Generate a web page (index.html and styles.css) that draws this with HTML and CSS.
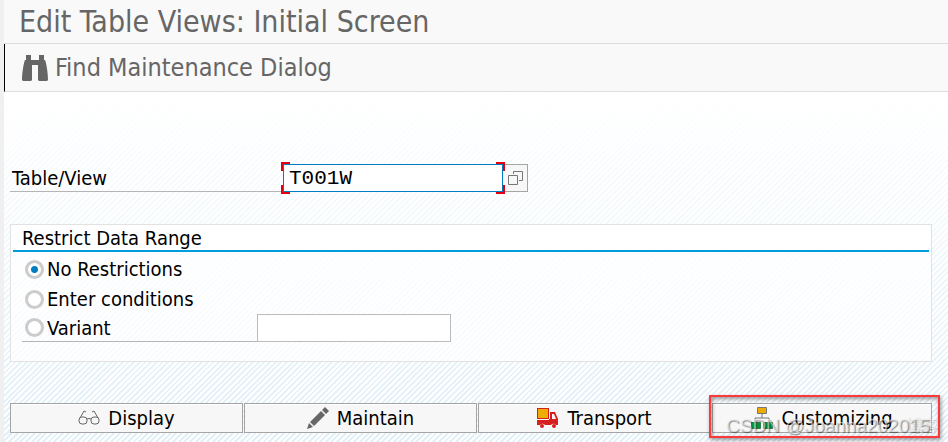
FILE: index.html
```html
<!DOCTYPE html>
<html lang="en">
  <head>
    <meta charset="UTF-8" />
    <meta name="viewport" content="width=device-width, initial-scale=1.0" />
    <title>Edit Table Views: Initial Screen</title>
    <link rel="stylesheet" href="styles.css">
  </head>
  <body>
    <div class="window">
      <header class="title-bar">
        <h1>Edit Table Views: Initial Screen</h1>
      </header>
      <div class="toolbar">
        <button type="button" class="tool">
          <svg width="26" height="26" viewBox="0 0 26 26" fill="#666">
            <path d="M4 0h5v5h8V0h5v5h1c1 2 3 12 3 20l-1 1h-8l-1-1V10h-6v15l-1 1H1l-1-1C0 17 2 7 3 5h1z" />
          </svg>
          Find Maintenance Dialog
        </button>
      </div>

      <main>
        <div class="field-row">
          <label for="table-view">Table/View</label>
          <span class="focus-box">
            <input type="text" id="table-view" value="T001W" />
            <span class="corners"></span>
          </span>
          <button type="button" class="value-help" aria-label="Value help">
            <svg width="17" height="16" viewBox="0 0 17 16" fill="none" stroke="#777">
              <path d="M6.500 4V1.500h9v9H12M1.500 5.500h9v9h-9z" />
            </svg>
          </button>
        </div>

        <section class="group">
          <h2>Restrict Data Range</h2>
          <div class="options">
            <label class="option"><input type="radio" name="range" checked />No Restrictions</label>
            <label class="option"><input type="radio" name="range" />Enter conditions</label>
            <div class="variant-row">
              <label class="option"><input type="radio" name="range" />Variant</label>
              <input type="text" class="variant" aria-label="Variant name" />
            </div>
          </div>
        </section>

        <div class="actions">
          <button type="button">
            <svg width="22" height="20" viewBox="0 0 22 20" fill="none" stroke="#666">
              <path d="M2 10L6 3l2 1M20 10l-4-7-2 1M9 11q2-1 4 0" />
              <rect x="1" y="9" width="8" height="7" rx="3" />
              <rect x="13" y="9" width="8" height="7" rx="3" />
            </svg>
            Display
          </button>
          <button type="button">
            <svg width="22" height="22" viewBox="0 0 22 22" fill="#666">
              <path d="M0 22l2-6 4 4zM3 15L14 4l4 4L7 19zM15 3l3-3 4 4-3 3z" />
            </svg>
            Maintain
          </button>
          <button type="button">
            <svg width="22" height="20" viewBox="0 0 22 20">
              <path fill="#d71f1f" d="M0 0h12v11h1V4h5l3 7v6h-2a3 3 0 0 0-5 0H8a3 3 0 0 0-5 0H0v-5h12v-1H0z" />
              <path fill="#f0ab00" d="M1 1h10v9H1z" />
              <path fill="#f7f7f7" d="M15 6h2l2 5h-4zM0 11h12v1H0z" />
              <g fill="#d71f1f"><circle cx="5" cy="18" r="2" /><circle cx="17" cy="18" r="2" /></g>
            </svg>
            Transport
          </button>
          <div class="marked">
            <button type="button">
              <svg width="22" height="22" viewBox="0 0 22 22">
                <path fill="none" stroke="#777" d="M11 6v5M4 15v-4h14v4" />
                <path fill="#f0ab00" stroke="#777" d="M6.500.5h9v6h-9z" />
                <path fill="#009640" stroke="#337a45" d="M.5 15.500h9v6h-9zM12.500 15.500h9v6h-9z" />
              </svg>
              Customizing
            </button>
            <span class="marker"></span>
            <span class="watermark-tail">博客</span>
            <span class="watermark">CSDN @Joanna202015</span>
          </div>
        </div>
      </main>
    </div>
  </body>
</html>
```
FILE: styles.css
```css
* {
  box-sizing: border-box;
}
body {
  margin: 0;
  background-color: #f0f0f0;
  font-family: "DejaVu Sans Condensed", "Noto Sans", sans-serif;
  font-size: 20px;
  color: #000;
}
button,
input {
  font: inherit;
  color: inherit;
  margin: 0;
}
h1,
h2 {
  margin: 0;
  font-weight: normal;
}
.window {
  display: flex;
  flex-direction: column;
  min-height: 100vh;
  margin-left: 4px;
  overflow: hidden;
}

.title-bar {
  height: 44px;
  padding-left: 15px;
  background-color: #f9f9f9;
  border-bottom: 1px solid #ddd;
}
.title-bar h1 {
  font-size: 30px;
  line-height: 43px;
  color: #666;
}
.toolbar {
  display: flex;
  height: 48px;
  background-color: #f9f9f9;
  border-left: 1px solid #000;
  border-bottom: 1px solid #ddd;
}
.tool {
  display: flex;
  align-items: center;
  gap: 7px;
  padding: 0 17px;
  border: 0;
  background: none;
  font-size: 25px;
  color: #666;
}

/* diagonal hatching that fades in towards the bottom */
main {
  flex: 1;
  padding: 72px 16px 8px 6px;
  background:
    linear-gradient(#fff, rgba(255, 255, 255, 0)),
    repeating-linear-gradient(135deg, #fff 0 2px, #e2f0f8 2px 4px);
}

.field-row {
  display: flex;
  height: 28px;
}
.field-row > label {
  width: 273px;
  padding-left: 2px;
  line-height: 28px;
  border-bottom: 1px solid #b5b5b5;
}
.focus-box {
  position: relative;
  width: 220px;
}
.focus-box input {
  display: block;
  width: 100%;
  height: 28px;
  padding: 0 5px;
  border: 1px solid #007cc0;
  background-color: #fff;
  font-family: "Liberation Mono", monospace;
  font-size: 21px;
  outline: 0;
}
/* red brackets round the focused field */
.corners {
  position: absolute;
  inset: -2px;
  pointer-events: none;
  background:
    linear-gradient(#e2000f, #e2000f) 0 0 / 9px 2px,
    linear-gradient(#e2000f, #e2000f) 0 0 / 2px 9px,
    linear-gradient(#e2000f, #e2000f) 100% 0 / 9px 2px,
    linear-gradient(#e2000f, #e2000f) 100% 0 / 2px 9px,
    linear-gradient(#e2000f, #e2000f) 0 100% / 9px 2px,
    linear-gradient(#e2000f, #e2000f) 0 100% / 2px 9px,
    linear-gradient(#e2000f, #e2000f) 100% 100% / 9px 2px,
    linear-gradient(#e2000f, #e2000f) 100% 100% / 2px 9px;
  background-repeat: no-repeat;
}
.value-help {
  display: flex;
  align-items: center;
  justify-content: center;
  width: 25px;
  padding: 0;
  border: 1px solid #a5a5a5;
  border-left: 0;
  background-color: #f7f7f7;
}

.group {
  height: 138px;
  margin-top: 32px;
  padding: 0 2px;
  border: 1px solid #e2e2e2;
  background-color: rgba(255, 255, 255, 0.7);
}
.group h2 {
  height: 27px;
  padding-left: 9px;
  border-bottom: 2px solid #009ddc;
  background-color: #fff;
  font-size: 20px;
  line-height: 26px;
}
.options {
  padding: 2px 9px;
}
.option {
  display: flex;
  align-items: center;
  gap: 3px;
  height: 30px;
  padding-left: 3px;
}
.option input {
  appearance: none;
  width: 19px;
  height: 19px;
  border: 3px solid #ccc;
  border-radius: 50%;
  background-color: #fff;
}
.option input:checked {
  background: radial-gradient(circle, #007cc0 3px, #fff 4px);
}
.variant-row {
  display: flex;
  height: 28px;
}
.variant-row .option {
  width: 235px;
  height: 28px;
  border-bottom: 1px solid #b5b5b5;
}
.variant {
  width: 194px;
  padding: 0 5px;
  border: 1px solid #bbb;
  background-color: #fff;
}

.actions {
  display: grid;
  grid-template-columns: 233fr 233fr 233fr 220fr;
  gap: 1px;
  margin-top: 41px;
}
.actions button {
  display: flex;
  align-items: center;
  justify-content: center;
  gap: 8px;
  width: 100%;
  height: 30px;
  padding: 0;
  border: 1px solid #a5a5a5;
  background-color: #f7f7f7;
  box-shadow: inset 0 1px #fff;
  white-space: nowrap;
}
.marked {
  position: relative;
}
.marker {
  position: absolute;
  inset: -8px -8px -5px -3px;
  border: 2px solid #fb3b3b;
  box-shadow: 1px 2px 4px rgba(0, 0, 0, 0.4), inset 1px 2px 4px rgba(0, 0, 0, 0.4);
  pointer-events: none;
}
.watermark,
.watermark-tail {
  position: absolute;
  top: 12px;
  font-family: "Liberation Sans", "Noto Sans CJK SC", sans-serif;
  line-height: 22px;
  white-space: nowrap;
  color: rgba(240, 240, 240, 0.6);
  pointer-events: none;
}
.watermark {
  left: 14px;
  font-size: 19px;
  text-shadow: 1px 1px 1px rgba(0, 0, 0, 0.45);
}
.watermark-tail {
  right: -6px;
  font-size: 16px;
  text-shadow: 1px 1px 1px rgba(0, 0, 0, 0.15);
}
```
